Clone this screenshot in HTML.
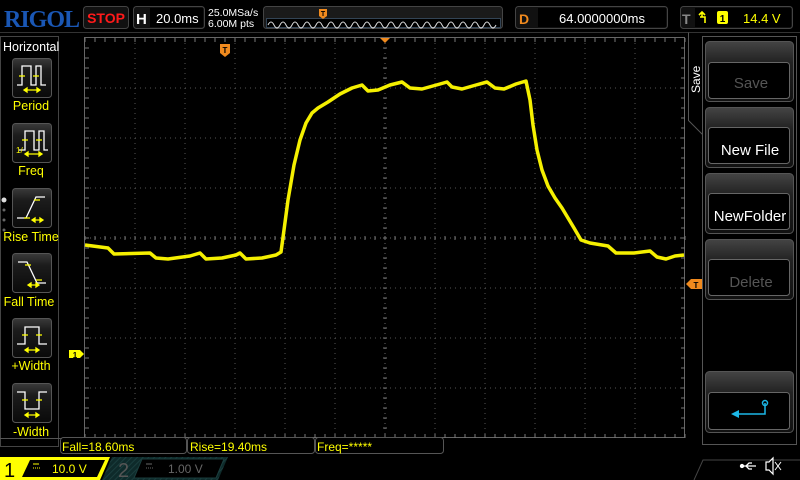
<!DOCTYPE html>
<html><head><meta charset="utf-8"><style>
html,body{margin:0;padding:0;background:#000;width:800px;height:480px;overflow:hidden}
svg{display:block}
text{font-family:"Liberation Sans",sans-serif}
</style></head><body>
<svg width="800" height="480" viewBox="0 0 800 480" xmlns="http://www.w3.org/2000/svg">
<defs>
<linearGradient id="btn" x1="0" y1="0" x2="0" y2="1"><stop offset="0" stop-color="#3a3a3a"/><stop offset="0.3" stop-color="#1c1c1c"/><stop offset="1" stop-color="#0a0a0a"/></linearGradient>
<linearGradient id="sb" x1="0" y1="0" x2="0" y2="1"><stop offset="0" stop-color="#444"/><stop offset="0.35" stop-color="#222"/><stop offset="1" stop-color="#111"/></linearGradient>
<pattern id="hatch" width="4" height="4" patternUnits="userSpaceOnUse" patternTransform="rotate(45)"><rect width="4" height="4" fill="#0e2a2a"/><line x1="0" y1="0" x2="0" y2="4" stroke="#1a3d3d" stroke-width="2"/></pattern>
</defs>
<rect width="800" height="480" fill="#000"/>
<!-- top bar -->
<text x="4" y="27" style="font-family:'Liberation Serif',serif" font-weight="bold" font-size="24" fill="#1a57b5" letter-spacing="-1">RIGOL</text>
<rect x="83.5" y="6.5" width="45" height="22" rx="3" fill="#111" stroke="#444"/>
<text x="106" y="23" text-anchor="middle" font-size="14" font-weight="bold" fill="#ff1a1a">STOP</text>
<rect x="133.5" y="6.5" width="71" height="22" rx="3" fill="#111" stroke="#444"/>
<rect x="150" y="8" width="53" height="19" fill="#000"/>
<text x="136" y="24" font-size="15" font-weight="bold" fill="#fff">H</text>
<text x="156" y="23" font-size="13" fill="#fff">20.0ms</text>
<text x="208" y="16" font-size="10.5" fill="#fff">25.0MSa/s</text>
<text x="208" y="27" font-size="10.5" fill="#fff">6.00M pts</text>
<rect x="263.5" y="6.5" width="239" height="22" rx="3" fill="#1a1a1a" stroke="#444"/>
<rect x="266.5" y="18.5" width="234" height="9" fill="#000" stroke="#345"/>
<path d="M268 25 q3 -6 6 0 t6 0 t6 0 t6 0 t6 0 t6 0 t6 0 t6 0 t6 0 t6 0 t6 0 t6 0 t6 0 t6 0 t6 0 t6 0 t6 0 t6 0 t6 0 t6 0 t6 0 t6 0 t6 0 t6 0 t6 0 t6 0 t6 0 t6 0 t6 0 t6 0 t6 0 t6 0 t6 0 t6 0 t6 0 t6 0 t6 0 t6 0" fill="none" stroke="#ddd" stroke-width="1"/>
<path d="M319 9h8v7l-4 3-4-3z" fill="#f08a1e"/><text x="323" y="16" text-anchor="middle" font-size="7" font-weight="bold" fill="#000">T</text>
<rect x="515.5" y="6.5" width="152" height="22" rx="3" fill="#111" stroke="#444"/>
<rect x="538" y="8" width="128" height="19" fill="#000"/>
<text x="519" y="24" font-size="14" font-weight="bold" fill="#f08a1e">D</text>
<text x="559" y="23" font-size="13" fill="#fff">64.0000000ms</text>
<rect x="680.5" y="6.5" width="112" height="22" rx="3" fill="#111" stroke="#444"/>
<rect x="695" y="8" width="96" height="19" fill="#000"/>
<text x="682" y="24" font-size="14" font-weight="bold" fill="#888">T</text>
<path d="M702 12v5h3M700 17h5v6M699 15l3-3 3 3" fill="none" stroke="#ff0" stroke-width="1.6"/>
<rect x="717" y="11" width="11" height="13" rx="2" fill="#ff0"/><text x="722.5" y="22" text-anchor="middle" font-size="10" font-weight="bold" fill="#000">1</text>
<text x="743" y="23" font-size="13" fill="#ff0">14.4 V</text>
<line x1="0" y1="32.5" x2="800" y2="32.5" stroke="#333"/>
<!-- left panel -->
<rect x="0.5" y="36.5" width="58" height="410" fill="none" stroke="#444"/>
<text x="3" y="51" font-size="12.5" fill="#fff">Horizontal</text>
<g stroke="#fff" stroke-width="1.3" fill="none">
 <g transform="translate(12,58)"><rect x="0.5" y="0.5" width="39" height="39" rx="3" fill="url(#btn)" stroke="#555" stroke-width="1"/>
  <path d="M5 27h5V8h9v19h5V8h5v19h5" /><path d="M7 18h6M21 18h6" stroke="#ff0"/><path d="M12 32h16M12 32l3-2v4zM28 32l-3-2v4z" stroke="#ff0" fill="#ff0"/></g>
 <g transform="translate(12,123)"><rect x="0.5" y="0.5" width="39" height="39" rx="3" fill="url(#btn)" stroke="#555" stroke-width="1"/>
  <path d="M7 27h6V8h9v19h5V8h5v19h4"/><path d="M10 17h6M24 17h6" stroke="#ff0"/><path d="M13 31h17M13 31l3-2v4zM30 31l-3-2v4z" stroke="#ff0" fill="#ff0"/><text x="4" y="30" font-size="8" fill="#ff0" stroke="none">1/</text></g>
 <g transform="translate(12,188)"><rect x="0.5" y="0.5" width="39" height="39" rx="3" fill="url(#btn)" stroke="#555" stroke-width="1"/>
  <path d="M5 30h9l10-21h9"/><path d="M12 30h6M22 12h6" stroke="#ff0"/><path d="M20 32h11M20 32l3-2v4zM31 32l-3-2v4z" stroke="#ff0" fill="#ff0"/></g>
 <g transform="translate(12,253)"><rect x="0.5" y="0.5" width="39" height="39" rx="3" fill="url(#btn)" stroke="#555" stroke-width="1"/>
  <path d="M6 9h9l10 21h9"/><path d="M13 12h6M24 27h6" stroke="#ff0"/><path d="M16 32h11M16 32l3-2v4zM27 32l-3-2v4z" stroke="#ff0" fill="#ff0"/></g>
 <g transform="translate(12,318)"><rect x="0.5" y="0.5" width="39" height="39" rx="3" fill="url(#btn)" stroke="#555" stroke-width="1"/>
  <path d="M5 26h8V9h14v17h8"/><path d="M10 17h6M24 17h6" stroke="#ff0"/><path d="M13 32h14M13 32l3-2v4zM27 32l-3-2v4z" stroke="#ff0" fill="#ff0"/></g>
 <g transform="translate(12,383)"><rect x="0.5" y="0.5" width="39" height="39" rx="3" fill="url(#btn)" stroke="#555" stroke-width="1"/>
  <path d="M5 9h8v17h14V9h8"/><path d="M10 17h6M24 17h6" stroke="#ff0"/><path d="M13 32h14M13 32l3-2v4zM27 32l-3-2v4z" stroke="#ff0" fill="#ff0"/></g>
</g>
<g font-size="12.5" fill="#ff0" text-anchor="middle">
<text x="31" y="110">Period</text><text x="31" y="175">Freq</text><text x="31" y="241">Rise Time</text>
<text x="29" y="306">Fall Time</text><text x="31" y="370">+Width</text><text x="31" y="436">-Width</text></g>
<circle cx="4" cy="200" r="2.5" fill="#ddd"/><circle cx="4" cy="210" r="1.5" fill="#666"/><circle cx="4" cy="220" r="1.5" fill="#666"/><circle cx="4" cy="230" r="1.5" fill="#666"/>
<!-- grid -->
<rect x="84.5" y="37.5" width="600" height="400" fill="none" stroke="#666"/>
<g stroke="#555" stroke-dasharray="1 4" stroke-width="1">
 <path d="M135 38v400M185 38v400M235 38v400M285 38v400M335 38v400M435 38v400M485 38v400M535 38v400M585 38v400M635 38v400"/>
 <path d="M85 88h600M85 138h600M85 188h600M85 288h600M85 338h600M85 388h600"/>
</g>
<g stroke="#777" stroke-width="1">
 <path d="M385 38v400M85 238h600" stroke-dasharray="1 4" stroke="#666"/>
 <path id="tx" d="M85 38v4M95 38v4M105 38v4M115 38v4M125 38v4M135 38v4M145 38v4M155 38v4M165 38v4M175 38v4M185 38v4M195 38v4M205 38v4M215 38v4M225 38v4M235 38v4M245 38v4M255 38v4M265 38v4M275 38v4M285 38v4M295 38v4M305 38v4M315 38v4M325 38v4M335 38v4M345 38v4M355 38v4M365 38v4M375 38v4M385 38v4M395 38v4M405 38v4M415 38v4M425 38v4M435 38v4M445 38v4M455 38v4M465 38v4M475 38v4M485 38v4M495 38v4M505 38v4M515 38v4M525 38v4M535 38v4M545 38v4M555 38v4M565 38v4M575 38v4M585 38v4M595 38v4M605 38v4M615 38v4M625 38v4M635 38v4M645 38v4M655 38v4M665 38v4M675 38v4M685 38v4"/>
 <use href="#tx" transform="translate(0,396)"/>
 <use href="#tx" transform="translate(0,198)"/>
 <path id="ty" d="M85 48h4M85 58h4M85 68h4M85 78h4M85 88h4M85 98h4M85 108h4M85 118h4M85 128h4M85 138h4M85 148h4M85 158h4M85 168h4M85 178h4M85 188h4M85 198h4M85 208h4M85 218h4M85 228h4M85 238h4M85 248h4M85 258h4M85 268h4M85 278h4M85 288h4M85 298h4M85 308h4M85 318h4M85 328h4M85 338h4M85 348h4M85 358h4M85 368h4M85 378h4M85 388h4M85 398h4M85 408h4M85 418h4M85 428h4"/>
 <use href="#ty" transform="translate(596,0)"/>
 <use href="#ty" transform="translate(298,0)"/>
</g>
<!-- markers -->
<path d="M220 44h10v9l-5 4-5-4z" fill="#f08a1e"/><text x="225" y="53" text-anchor="middle" font-size="8" font-weight="bold" fill="#000">T</text>
<path d="M380 38h10l-5 5z" fill="#f08a1e"/>
<path d="M686 284l5-5h12v10h-12z" fill="#f08a1e"/><text x="696" y="288" text-anchor="middle" font-size="8" font-weight="bold" fill="#000">T</text>
<path d="M69 350h11l4 4-4 4h-11z" fill="#ff0"/><text x="75" y="358" text-anchor="middle" font-size="8" font-weight="bold" fill="#000">1</text>
<!-- waveform -->
<polyline fill="none" stroke="#f5f000" stroke-width="3.5" stroke-linejoin="round" points="85,245 108,248 114,254 150,253 156,258 168,259 190,256 200,253 206,259 222,258 236,255 240,253 246,259 262,258 276,255 281,252 284,230 288,200 294,165 300,140 306,123 312,113 318,108 328,102 340,94 352,88 362,85 368,91 378,90 390,85 402,82 410,88 422,89 440,84 447,82 452,87 462,89 476,85 487,82 495,88 504,89 516,84 526,81 530,100 533,125 537,150 542,170 548,186 555,198 562,208 568,218 574,228 581,240 590,243 608,246 616,253 634,253 650,251 657,257 666,259 675,256 684,255"/>
<!-- right panel -->
<path d="M688.5 32.5v88l14 14v310" fill="none" stroke="#555"/>
<rect x="702.5" y="36.5" width="94" height="408" fill="none" stroke="#555"/>
<text transform="translate(700,93) rotate(-90)" font-size="12" fill="#fff">Save</text>
<g>
 <rect x="705.5" y="41.5" width="88" height="60" rx="4" fill="url(#sb)" stroke="#555"/><rect x="708.5" y="62.5" width="81" height="36" rx="3" fill="#000" stroke="#666"/>
 <text x="751" y="88" text-anchor="middle" font-size="15" fill="#555">Save</text>
 <rect x="705.5" y="107.5" width="88" height="60" rx="4" fill="url(#sb)" stroke="#555"/><rect x="708.5" y="127.5" width="81" height="36" rx="3" fill="#000" stroke="#666"/>
 <text x="750" y="155" text-anchor="middle" font-size="15" fill="#fff">New File</text>
 <rect x="705.5" y="173.5" width="88" height="60" rx="4" fill="url(#sb)" stroke="#555"/><rect x="708.5" y="193.5" width="81" height="36" rx="3" fill="#000" stroke="#666"/>
 <text x="750" y="221" text-anchor="middle" font-size="15" fill="#fff">NewFolder</text>
 <rect x="705.5" y="239.5" width="88" height="60" rx="4" fill="url(#sb)" stroke="#555"/><rect x="708.5" y="259.5" width="81" height="36" rx="3" fill="#000" stroke="#666"/>
 <text x="751" y="287" text-anchor="middle" font-size="15" fill="#555">Delete</text>
 <rect x="705.5" y="371.5" width="88" height="61" rx="4" fill="url(#sb)" stroke="#555"/><rect x="708.5" y="392.5" width="81" height="37" rx="3" fill="#000" stroke="#666"/>
 <path d="M765 403v11h-27" fill="none" stroke="#1cb8e8" stroke-width="1.5"/><path d="M731 414l8-4v8z" fill="#1cb8e8"/><circle cx="765" cy="403" r="2.5" fill="none" stroke="#1cb8e8" stroke-width="1.5"/>
</g>
<!-- measurements -->
<path d="M0 438.5h62" stroke="#555"/>
<g fill="none" stroke="#555"><rect x="60.5" y="437.5" width="126" height="16" rx="3"/><rect x="187.5" y="437.5" width="127" height="16" rx="3"/><rect x="315.5" y="437.5" width="128" height="16" rx="3"/></g>
<g font-size="12" fill="#ff0"><text x="62" y="451">Fall=18.60ms</text><text x="190" y="451">Rise=19.40ms</text><text x="317" y="451">Freq=*****</text></g>
<!-- bottom channels -->
<path d="M0 457h110l-10 23H0z" fill="#ff0"/>
<path d="M30 460h75l-8 17H22z" fill="#000"/>
<text x="4" y="477" font-size="20" fill="#000">1</text>
<path d="M33 464h6M33 468h1M35 468h1M37 468h1M39 468h1" stroke="#ff0"/>
<text x="52" y="473" font-size="12" fill="#ff0">10.0 V</text>
<path d="M112 457h116l-10 23H102z" fill="url(#hatch)"/>
<path d="M142 459h82l-8 19H134z" fill="#000" stroke="#1a3d3d"/>
<text x="118" y="477" font-size="20" fill="#555">2</text>
<path d="M146 464h6M146 468h1M148 468h1M150 468h1M152 468h1" stroke="#666"/>
<text x="168" y="473" font-size="12" fill="#666">1.00 V</text>
<path d="M694 480l9-20h97" fill="none" stroke="#444"/>
<g stroke="#fff" fill="none" stroke-width="1.3"><path d="M742 466h14M746 466l3-3h3M746 466l3 3h3"/><circle cx="742" cy="466" r="1.5" fill="#fff"/></g>
<path d="M766 462h3l4-4v16l-4-4h-3z" fill="none" stroke="#fff" stroke-width="1.2"/>
<path d="M775 462l6 8M781 462l-6 8" stroke="#fff" stroke-width="1"/>
</svg>
</body></html>
